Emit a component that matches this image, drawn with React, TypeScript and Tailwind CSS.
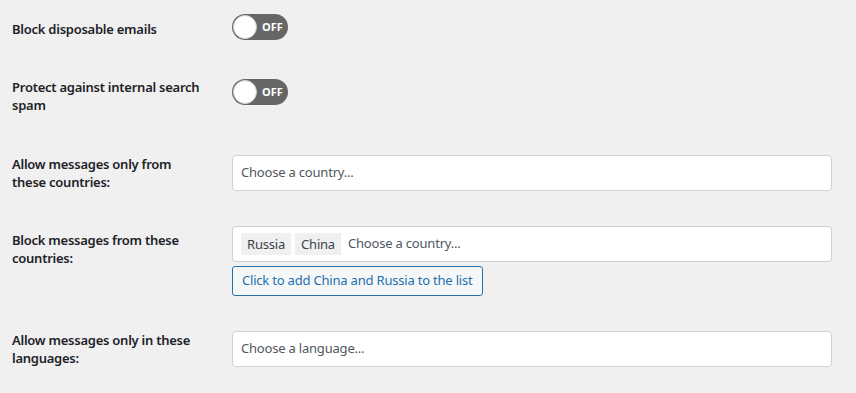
import React from "react";

const font = { fontFamily: '"Segoe UI", "Noto Sans", "Open Sans", sans-serif' };

function Toggle() {
  return (
    <div className="relative w-[56px] h-[26px] rounded-full bg-[#666666]">
      <div className="absolute left-[1px] top-[1px] w-[24px] h-[24px] rounded-full bg-white border border-[#cfcfcf]" />
      <span className="absolute left-[30px] top-0 h-[26px] leading-[26px] text-[11px] font-bold text-white">OFF</span>
    </div>
  );
}

function Label({ children, pt }: { children: React.ReactNode; pt: string }) {
  return (
    <div className={`ml-3 w-[200px] pr-[10px] shrink-0 text-[13px] leading-[18px] font-semibold tracking-[-0.25px] text-[#1d2327] ${pt}`}>
      {children}
    </div>
  );
}

function Input({ placeholder, children }: { placeholder: string; children?: React.ReactNode }) {
  return (
    <div className="w-[600px] h-[36px] bg-white border border-[#d0d0d0] rounded-[4px] flex items-center px-[8px] gap-[4px]">
      {children}
      <span className={`text-[13px] tracking-[-0.2px] text-[#50575e] ${children ? "ml-[3px]" : ""}`}>{placeholder}</span>
    </div>
  );
}

function Tag({ children }: { children: React.ReactNode }) {
  return (
    <span className="h-[22px] leading-[22px] px-[6px] bg-[#f0f0f1] text-[13px] tracking-[-0.2px] text-[#3c434a]">{children}</span>
  );
}

export default function App() {
  return (
    <div className="w-full h-screen bg-[#f0f0f1] overflow-hidden" style={font}>
      <div className="flex h-[58px]">
        <Label pt="pt-[20px]">Block disposable emails</Label>
        <div className="ml-[20px] mt-[14px]">
          <Toggle />
        </div>
      </div>
      <div className="flex h-[76px]">
        <Label pt="pt-[20px]">Protect against internal search spam</Label>
        <div className="ml-[20px] mt-[21px]">
          <Toggle />
        </div>
      </div>
      <div className="flex h-[76px]">
        <Label pt="pt-[21px]">Allow messages only from these countries:</Label>
        <div className="ml-[20px] mt-[21px]">
          <Input placeholder="Choose a country..." />
        </div>
      </div>
      <div className="flex h-[100px]">
        <Label pt="pt-[21px]">Block messages from these countries:</Label>
        <div className="ml-[20px] mt-[16px] flex flex-col items-start gap-[4px]">
          <Input placeholder="Choose a country...">
            <Tag>Russia</Tag>
            <Tag>China</Tag>
          </Input>
          <button className="h-[30px] px-[9px] border border-[#2271b1] bg-[#f6f7f7] rounded-[3px] text-[13px] tracking-[-0.2px] text-[#2271b1]">
            Click to add China and Russia to the list
          </button>
        </div>
      </div>
      <div className="flex">
        <Label pt="pt-[21px]">Allow messages only in these languages:</Label>
        <div className="ml-[20px] mt-[21px]">
          <Input placeholder="Choose a language..." />
        </div>
      </div>
    </div>
  );
}
